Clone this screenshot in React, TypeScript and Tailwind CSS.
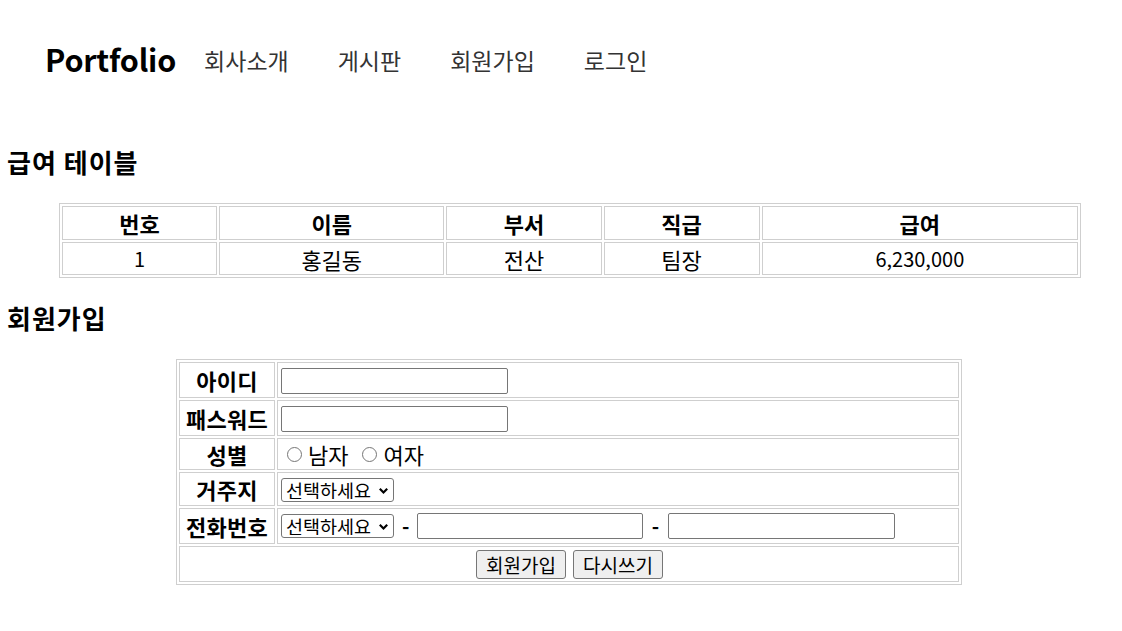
import { useState } from "react";

const font = "font-['Noto_Sans_CJK_KR','Noto_Sans',sans-serif]";

const menus = ["회사소개", "게시판", "회원가입", "로그인"];

const salaryCols = [
  { label: "번호", w: "w-[155px]" },
  { label: "이름", w: "w-[225px]" },
  { label: "부서", w: "w-[155px]" },
  { label: "직급", w: "w-[156px]" },
  { label: "급여", w: "w-[316px]" },
];

const salaryRows = [["1", "홍길동", "전산", "팀장", "6,230,000"]];

function Header() {
  return (
    <header className="flex h-[120px] items-center pl-[45px]">
      <h1 className="text-[30.5px] font-bold tracking-[-0.2px] text-black">Portfolio</h1>
      <nav className="ml-[28px] flex gap-[49px] text-[23px] text-[#333]">
        {menus.map((m) => (
          <a key={m} href="#" className="leading-none">
            {m}
          </a>
        ))}
      </nav>
    </header>
  );
}

function SalaryTable() {
  return (
    <table className="ml-[59px] w-[1022px] table-fixed border-separate border-spacing-[2px] border border-[#cfcfcf] text-[22px]">
      <thead>
        <tr className="h-[34px]">
          {salaryCols.map((c) => (
            <th key={c.label} className={`${c.w} border border-[#cfcfcf] p-0 text-center font-bold leading-none`}>
              {c.label}
            </th>
          ))}
        </tr>
      </thead>
      <tbody>
        {salaryRows.map((r) => (
          <tr key={r[0]} className="h-[33px]">
            {r.map((v, i) => (
              <td
                key={i}
                className={`border border-[#cfcfcf] p-0 text-center leading-none ${/^[\d,]+$/.test(v) ? "text-[20px]" : ""}`}
              >
                {v}
              </td>
            ))}
          </tr>
        ))}
      </tbody>
    </table>
  );
}

function Select() {
  return (
    <span className="inline-flex h-[24px] w-[113px] items-center rounded-[3px] border border-[#767676] bg-white pl-[4px] pr-[4px] font-normal">
      <select className="h-full min-w-0 flex-1 appearance-none bg-transparent text-[18.5px] leading-none outline-none">
        <option>선택하세요</option>
        <option>서울</option>
        <option>부산</option>
      </select>
      <svg width="11" height="11" viewBox="0 0 11 11" className="shrink-0">
        <path d="M1.8 3.8 5.5 7.5 9.2 3.8" fill="none" stroke="#000" strokeWidth="2.2" />
      </svg>
    </span>
  );
}

function TextInput({ type = "text", w = "w-[227px]" }: { type?: string; w?: string }) {
  return (
    <input
      type={type}
      className={`${w} h-[26px] rounded-[2px] border border-[#767676] bg-white px-1 text-[16px] align-middle outline-none`}
    />
  );
}

function Label({ children }: { children: React.ReactNode }) {
  return (
    <th className="w-[96px] border border-[#cfcfcf] p-0 text-center text-[22px] font-bold leading-none tracking-[0.3px]">
      {children}
    </th>
  );
}

function JoinForm() {
  const [gender, setGender] = useState("");
  const cell = "border border-[#cfcfcf] p-0 pl-[3px] text-left align-middle";
  return (
    <form onSubmit={(e) => e.preventDefault()}>
      <table className="ml-[176px] w-[786px] table-fixed border-separate border-spacing-[2px] border border-[#cfcfcf]">
        <tbody>
          <tr className="h-[36px]">
            <Label>아이디</Label>
            <td className={`${cell} pt-[1px]`}>
              <TextInput />
            </td>
          </tr>
          <tr className="h-[36px]">
            <Label>패스워드</Label>
            <td className={`${cell} pt-[1px]`}>
              <TextInput type="password" />
            </td>
          </tr>
          <tr className="h-[32px]">
            <Label>성별</Label>
            <td className={cell}>
              <div className="flex items-center text-[22px] leading-none">
                {["남자", "여자"].map((g, i) => (
                  <label key={g} className={`flex items-center ${i ? "ml-[8px]" : ""}`}>
                    <input
                      type="radio"
                      name="gender"
                      checked={gender === g}
                      onChange={() => setGender(g)}
                      className="mr-[6px] ml-[6px] h-[15px] w-[15px] appearance-none rounded-full border border-[#767676] bg-white checked:border-[4px] checked:border-[#0075ff]"
                    />
                    {g}
                  </label>
                ))}
              </div>
            </td>
          </tr>
          <tr className="h-[34px]">
            <Label>거주지</Label>
            <td className={cell}>
              <div className="flex items-center pt-[2px]">
                <Select />
              </div>
            </td>
          </tr>
          <tr className="h-[36px]">
            <Label>전화번호</Label>
            <td className={cell}>
              <div className="flex items-center text-[20px]">
                <Select />
                <span className="mx-[8px] w-[7px] text-center font-bold">-</span>
                <TextInput w="w-[226px]" />
                <span className="mx-[8px] w-[9px] text-center font-bold">-</span>
                <TextInput />
              </div>
            </td>
          </tr>
          <tr className="h-[36px]">
            <td colSpan={2} className="border border-[#cfcfcf] p-0 align-middle">
              <div className="flex justify-center gap-[7px] pl-[1px]">
                <button
                  type="submit"
                  className="h-[29px] w-[90px] rounded-[3px] border border-[#767676] bg-[#efefef] text-[19px] leading-none"
                >
                  회원가입
                </button>
                <button
                  type="reset"
                  className="h-[29px] w-[90px] rounded-[3px] border border-[#767676] bg-[#efefef] text-[19px] leading-none"
                >
                  다시쓰기
                </button>
              </div>
            </td>
          </tr>
        </tbody>
      </table>
    </form>
  );
}

export default function App() {
  return (
    <div className={`${font} min-h-[631px] bg-white text-black`}>
      <Header />
      <h2 className="mt-[26px] pl-[7px] text-[26px] font-bold leading-[32px] tracking-[1px]">급여 테이블</h2>
      <div className="mt-[25px]">
        <SalaryTable />
      </div>
      <h2 className="mt-[24px] pl-[7px] text-[26px] font-bold leading-[32px] tracking-[1px]">회원가입</h2>
      <div className="mt-[25px]">
        <JoinForm />
      </div>
    </div>
  );
}
